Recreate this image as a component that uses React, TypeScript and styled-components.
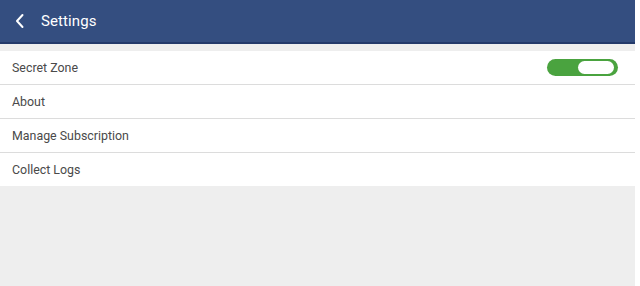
import React from 'react';
import styled, { createGlobalStyle } from 'styled-components';

const GlobalStyle = createGlobalStyle`
  html, body {
    margin: 0;
    padding: 0;
    background: #ffffff;
    font-family: Roboto, "Liberation Sans", Arial, sans-serif;
  }
`;

const Screen = styled.div`
  width: 635px;
  height: 286px;
  background: #eeeeee;
  display: flex;
  flex-direction: column;
`;

const Header = styled.header`
  height: 42px;
  background: #344e80;
  border-bottom: 2px solid #243a6a;
  display: flex;
  align-items: center;
  padding-left: 14px;
  gap: 15px;
  color: #ffffff;
`;

const Title = styled.h1`
  margin: 0;
  font-size: 15px;
  font-weight: 400;
  letter-spacing: 0.1px;
`;

const List = styled.div`
  margin-top: 7px;
  background: #ffffff;
  display: flex;
  flex-direction: column;
`;

const Row = styled.div`
  height: 33px;
  display: flex;
  align-items: center;
  justify-content: space-between;
  padding: 0 17px 0 12px;
  border-bottom: 1px solid #dcdcdc;
  font-size: 12.4px;
  color: #4a4a4a;

  &:last-child {
    border-bottom: none;
  }
`;

const Toggle = styled.div<{ on?: boolean }>`
  width: 71px;
  height: 17px;
  border-radius: 9px;
  background: ${p => (p.on ? '#4aa33f' : '#bdbdbd')};
  display: flex;
  align-items: center;
  justify-content: ${p => (p.on ? 'flex-end' : 'flex-start')};
  padding: 0 4px;
  box-sizing: border-box;
`;

const Knob = styled.div`
  width: 36px;
  height: 13px;
  border-radius: 7px;
  background: #ffffff;
`;

const BackIcon = () => (
  <svg width="12" height="16" viewBox="0 0 12 16" fill="none">
    <path d="M8.5 2 L3 8 L8.5 14" stroke="#ffffff" strokeWidth="2" strokeLinecap="round" strokeLinejoin="round" />
  </svg>
);

const items = ['About', 'Manage Subscription', 'Collect Logs'];

const App = (): JSX.Element => {
  return (
    <>
      <GlobalStyle />
      <Screen>
        <Header>
          <BackIcon />
          <Title>Settings</Title>
        </Header>
        <List>
          <Row>
            Secret Zone
            <Toggle on>
              <Knob />
            </Toggle>
          </Row>
          {items.map(label => (
            <Row key={label}>{label}</Row>
          ))}
        </List>
      </Screen>
    </>
  );
};

export default App;
